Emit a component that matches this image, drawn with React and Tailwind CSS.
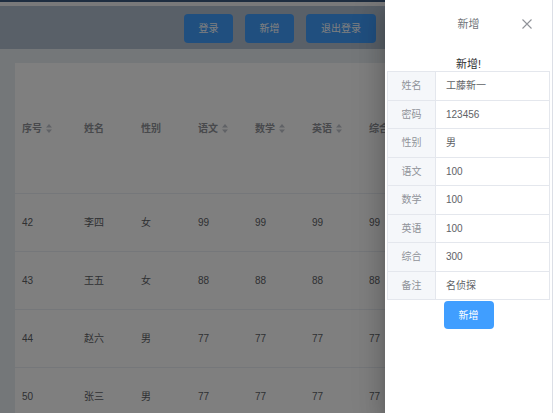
import React from "react";

const FONT = { fontFamily: '"Liberation Sans", "Noto Sans CJK SC", sans-serif' };

function SortCaret() {
  return (
    <svg width="6" height="9" viewBox="0 0 6 9" className="ml-[4px] inline-block">
      <path d="M3 0 L6 3.4 L0 3.4 Z" fill="#c0c4cc" />
      <path d="M3 9 L6 5.6 L0 5.6 Z" fill="#c0c4cc" />
    </svg>
  );
}

const cols = [
  { t: "序号", w: "w-[62px]", s: true },
  { t: "姓名", w: "w-[57px]" },
  { t: "性别", w: "w-[57px]" },
  { t: "语文", w: "w-[57px]", s: true },
  { t: "数学", w: "w-[57px]", s: true },
  { t: "英语", w: "w-[57px]", s: true },
  { t: "综合", w: "w-[57px]", s: true },
  { t: "备注", w: "w-[80px]" },
  { t: "操作", w: "w-[120px]" },
];

const rows = [
  ["42", "李四", "女", "99", "99", "99", "99", "", ""],
  ["43", "王五", "女", "88", "88", "88", "88", "", ""],
  ["44", "赵六", "男", "77", "77", "77", "77", "", ""],
  ["50", "张三", "男", "77", "77", "77", "77", "", ""],
];

const form = [
  ["姓名", "工藤新一"],
  ["密码", "123456"],
  ["性别", "男"],
  ["语文", "100"],
  ["数学", "100"],
  ["英语", "100"],
  ["综合", "300"],
  ["备注", "名侦探"],
];

export default function App() {
  return (
    <div className="relative w-[554px] h-[413px] overflow-hidden bg-[#e9eef3]" style={FONT}>
      <div className="h-[2px] bg-[#3d5a80]" />
      <div className="h-[4px] bg-[#f2f3f5]" />
      <div className="h-[43px] bg-[#b3c0d1] flex pl-[184px] pt-[8px] gap-[12px]">
        <div className="w-[49px] h-[29px] rounded-[4px] bg-[#409eff] text-white text-[10px] flex items-center justify-center">登录</div>
        <div className="w-[49px] h-[29px] rounded-[4px] bg-[#409eff] text-white text-[10px] flex items-center justify-center">新增</div>
        <div className="w-[70px] h-[29px] rounded-[4px] bg-[#409eff] text-white text-[10px] flex items-center justify-center">退出登录</div>
      </div>
      <div className="pl-[15px] pt-[14px]">
        <div className="bg-white w-[700px]">
          <div className="flex h-[131px] items-center border-b border-[#ebeef5]">
            {cols.map((c) => (
              <div key={c.t} className={`${c.w} shrink-0 pl-[7px] text-[10px] font-bold text-[#909399] flex items-center`}>
                {c.t}
                {c.s && <SortCaret />}
              </div>
            ))}
          </div>
          {rows.map((r, i) => (
            <div key={i} className="flex h-[58px] items-center border-b border-[#ebeef5]">
              {r.map((v, j) => (
                <div key={j} className={`${cols[j].w} shrink-0 pl-[7px] text-[10px] text-[#606266]`}>{v}</div>
              ))}
            </div>
          ))}
        </div>
      </div>

      <div className="absolute inset-0 bg-black/50" />

      <div className="absolute right-0 top-0 bottom-0 w-[169px] bg-white shadow-[0_8px_10px_-5px_rgba(0,0,0,0.2),0_16px_24px_2px_rgba(0,0,0,0.14),0_6px_30px_5px_rgba(0,0,0,0.12)] flex flex-col">
        <div className="h-full border-r border-[#dcdfe6] mr-[1px] flex flex-col">
          <div className="h-[48px] flex items-center relative">
            <div className="w-full text-center text-[11px] text-[#72767b]">新增</div>
            <svg className="absolute left-[137px] top-[19px]" width="10" height="10" viewBox="0 0 10 10">
              <path d="M0.5 0.5 L9.5 9.5 M9.5 0.5 L0.5 9.5" stroke="#909399" strokeWidth="1.1" fill="none" />
            </svg>
          </div>
          <div className="text-center text-[11px] text-[#303133] leading-[14px] mt-[9px] mb-[0px]">新增!</div>
          <div className="mx-[2px] border-t border-[#e4e7ed]">
            {form.map(([k, v]) => (
              <div key={k} className="flex h-[28.5px] border-b border-x border-[#e4e7ed]">
                <div className="w-[48px] shrink-0 bg-[#f5f7fa] border-r border-[#e4e7ed] flex items-center justify-center text-[10px] text-[#909399]">{k}</div>
                <div className="flex-1 flex items-center pl-[10px] text-[10px] text-[#606266]">{v}</div>
              </div>
            ))}
          </div>
          <div className="flex justify-center mt-[1px]">
            <div className="w-[50px] h-[28px] rounded-[4px] bg-[#409eff] text-white text-[10px] flex items-center justify-center">新增</div>
          </div>
        </div>
      </div>
    </div>
  );
}
